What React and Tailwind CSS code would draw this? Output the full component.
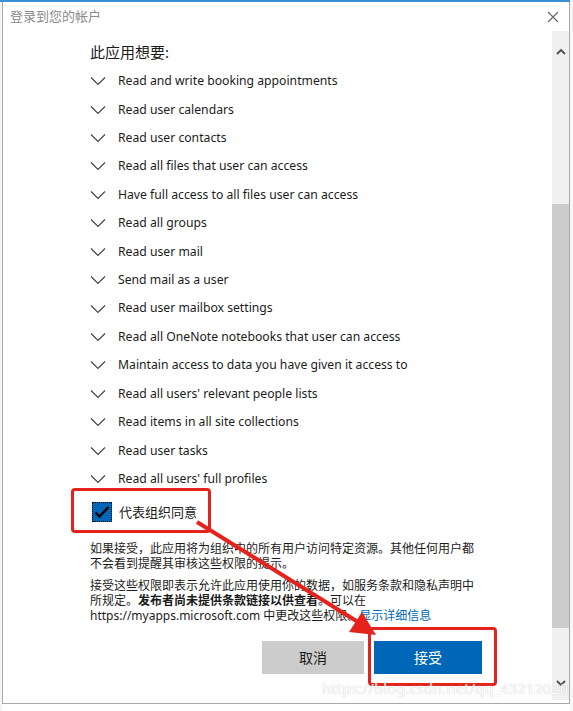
import React from "react";

const items = [
  "Read and write booking appointments",
  "Read user calendars",
  "Read user contacts",
  "Read all files that user can access",
  "Have full access to all files user can access",
  "Read all groups",
  "Read user mail",
  "Send mail as a user",
  "Read user mailbox settings",
  "Read all OneNote notebooks that user can access",
  "Maintain access to data you have given it access to",
  "Read all users' relevant people lists",
  "Read items in all site collections",
  "Read user tasks",
  "Read all users' full profiles",
];

const font = { fontFamily: '"Noto Sans", "Noto Sans CJK SC", sans-serif' };

function Chevron() {
  return (
    <svg width="16" height="10" viewBox="0 0 16 10" className="shrink-0">
      <polyline points="1,1.5 8,8.5 15,1.5" fill="none" stroke="#444" strokeWidth="1.2" />
    </svg>
  );
}

export default function App() {
  return (
    <div
      className="relative w-[573px] h-[711px] overflow-hidden bg-white flex text-[#222]"
      style={font}
    >
      {/* left background strip */}
      <div className="w-[2px] h-full bg-[#f4f4f4]" />
      {/* dialog */}
      <div className="flex-1 h-[704px] border-l border-r border-b border-[#a8a8a8] flex flex-col bg-white">
        <div className="h-[2px] bg-[#3a8fd4] -ml-[3px] -mr-[6px]" />
        <div className="h-[29px] flex items-center justify-between pl-[7px] pr-[10px]">
          <span className="text-[13px] text-[#8a8a8a] leading-none">登录到您的帐户</span>
          <svg width="12" height="12" viewBox="0 0 12 12">
            <path d="M1 1 L11 11 M11 1 L1 11" stroke="#666" strokeWidth="1.1" />
          </svg>
        </div>
        <div className="flex flex-1">
          <div className="flex-1 pl-[87px] flex flex-col">
            <div className="mt-[11px] text-[15px] leading-[20px] text-[#1b1b1b]">此应用想要:</div>
            <div className="mt-[5px] flex flex-col">
              {items.map((t) => (
                <div key={t} className="h-[28.43px] flex items-center gap-[12px]">
                  <Chevron />
                  <span className="text-[12.2px] text-[#1b1b1b] leading-none whitespace-nowrap">{t}</span>
                </div>
              ))}
            </div>
            <div className="mt-[9px] h-[20px] flex items-center gap-[7px] pl-[2px]">
              <div className="w-[20px] h-[20px] bg-[#0067b8] border border-dotted border-black flex items-center justify-center">
                <svg width="16" height="14" viewBox="0 0 16 14">
                  <path d="M1.5 7.5 L5.5 11.5 L14.5 2" fill="none" stroke="#000" strokeWidth="2.4" />
                </svg>
              </div>
              <span className="text-[13px] leading-none text-[#1b1b1b]">代表组织同意</span>
            </div>
            <div className="mt-[19px] text-[12px] leading-[15px] text-[#1b1b1b] whitespace-nowrap flex flex-col">
              <div>如果接受，此应用将为组织中的所有用户访问特定资源。其他任何用户都</div>
              <div>不会看到提醒其审核这些权限的提示。</div>
            </div>
            <div className="mt-[8px] text-[12px] leading-[14.6px] text-[#1b1b1b] whitespace-nowrap flex flex-col">
              <div>接受这些权限即表示允许此应用使用你的数据，如服务条款和隐私声明中</div>
              <div>
                所规定。<span className="font-bold">发布者尚未提供条款链接以供查看</span>。可以在
              </div>
              <div>
                https://myapps.microsoft.com 中更改这些权限。<span className="text-[#0067b8]">显示详细信息</span>
              </div>
            </div>
            <div className="mt-[18px] flex gap-[10px] pl-[172px]">
              <div className="w-[102px] h-[33px] bg-[#cccccc] flex items-center justify-center text-[14px] text-[#1b1b1b]">
                取消
              </div>
              <div className="w-[108px] h-[33px] bg-[#0067b8] flex items-center justify-center text-[14px] text-white">
                接受
              </div>
            </div>
          </div>
          {/* scrollbar */}
          <div className="w-[17px] h-[669px] bg-[#f0f0f0] flex flex-col">
            <div className="h-[173px] flex justify-center pt-[17px]">
              <svg width="10" height="7" viewBox="0 0 10 7">
                <polyline points="1,6 5,2 9,6" fill="none" stroke="#505050" strokeWidth="1.8" />
              </svg>
            </div>
            <div className="h-[424px] bg-[#cdcdcd]" />
            <div className="flex-1 flex justify-center items-end pb-[13px]">
              <svg width="10" height="7" viewBox="0 0 10 7">
                <polyline points="1,1 5,5 9,1" fill="none" stroke="#505050" strokeWidth="1.8" />
              </svg>
            </div>
          </div>
        </div>
      </div>
      {/* right background strip */}
      <div className="w-[3px] h-full bg-[#f7f7f7]" />

      {/* red annotation overlays */}
      <div className="absolute left-[71px] top-[488px] w-[140px] h-[45px] border-[3px] border-[#e5231c] rounded-[4px]" />
      <div className="absolute left-[368px] top-[627px] w-[129px] h-[59px] border-[3px] border-[#e5231c] rounded-[4px]" />
      <svg className="absolute left-0 top-0" width="573" height="711" viewBox="0 0 573 711">
        <line x1="197" y1="522" x2="358" y2="622" stroke="#e5231c" strokeWidth="4" />
        <polygon points="376,635 349,632 362,612" fill="#e5231c" />
      </svg>
      <div
        className="absolute left-[322px] top-[682px] text-[14px] text-white leading-none tracking-[0.5px] opacity-80"
        style={{ textShadow: "0 0 1px #c4c4c4, 0 0 1px #c4c4c4" }}
      >
        https://blog.csdn.net/qq_43212020
      </div>
    </div>
  );
}
